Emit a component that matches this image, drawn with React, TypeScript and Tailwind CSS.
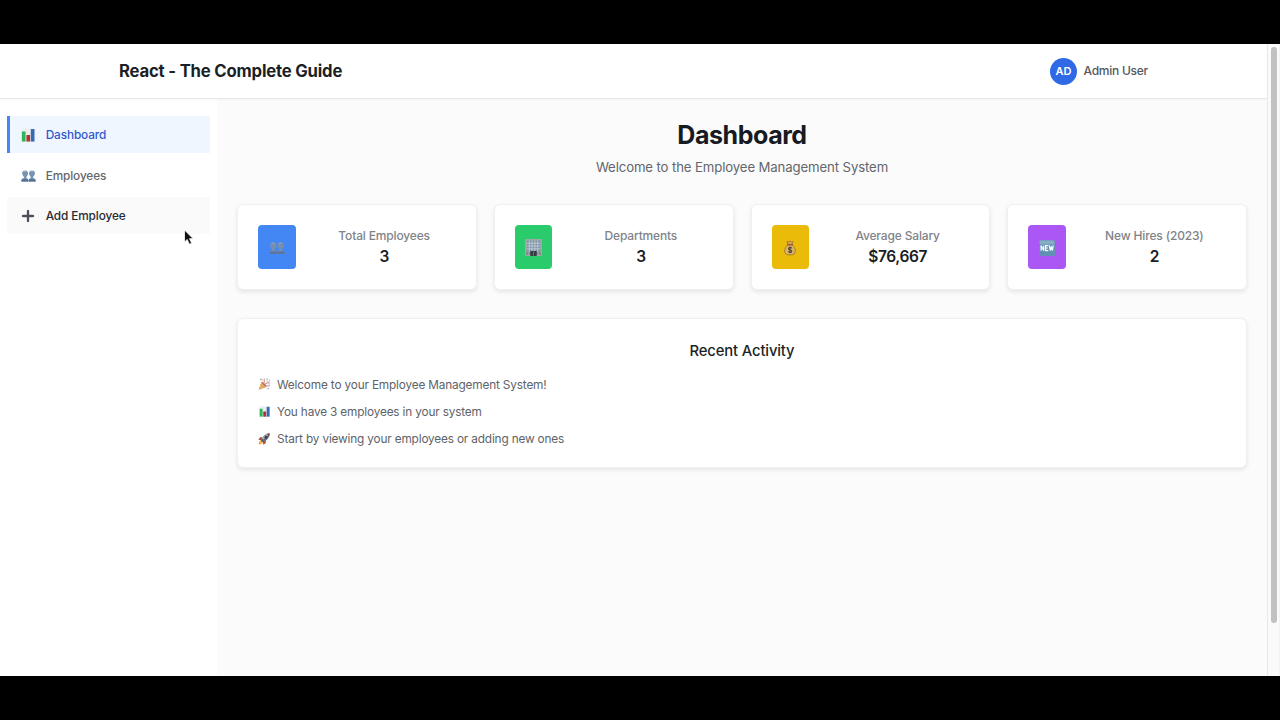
import type { ReactNode } from "react";

type IconProps = { className?: string };

function ChartIcon({ className }: IconProps) {
  return (
    <svg viewBox="0 0 16 16" className={className}>
      <rect x="0.5" y="0.5" width="15" height="15" fill="#edf0f3" />
      <path d="M.5 5.5h15M.5 10.5h15M5.5.5v15M10.5.5v15" stroke="#dfe3e8" strokeWidth=".5" />
      <rect x="1" y="4" width="4.200" height="11.5" fill="#2fb45a" />
      <rect x="6.2" y="8" width="4.200" height="7.5" fill="#b03430" />
      <rect x="11.2" y="1.2" width="4.200" height="14.3" fill="#3767b5" />
    </svg>
  );
}

function PeopleIcon({ className }: IconProps) {
  return (
    <svg viewBox="0 0 18 14" className={className}>
      <g fill="#7793b3">
        <path d="M.4 13.6c0-2.8 1-3.700 3-4.200l.3-1.200C2.600 7.200 1.300 5.600 1.300 3.800 1.300 1.700 2.700.4 4.900.4s3.600 1.300 3.600 3.400c0 1.800-1 3.400-2.200 4.400l.3 1.200c1.500.4 2.300 1.700 2.300 4.200z" />
        <path d="M9.200 13.600c0-2.500.8-3.800 2.300-4.200l.3-1.200c-1.200-1-2.200-2.600-2.200-4.400C9.600 1.700 11 .4 13.200.4s3.600 1.300 3.600 3.400c0 1.800-1.300 3.400-2.400 4.400l.3 1.200c2 .5 3 1.400 3 4.200z" />
      </g>
      <path d="M.4 13.600c0-1.100.2-1.900.7-2.600h7.300c.3.700.4 1.500.4 2.600zM9.200 13.600c0-1.100.1-1.900.4-2.600h7.300c.5.700.7 1.500.7 2.600z" fill="#536f91" />
      <path d="M2.700 2.500c.7-1.300 2.600-1.400 3.400-.3M11.200 2.500c.7-1.300 2.600-1.400 3.400-.3" stroke="#a3b7cc" fill="none" />
    </svg>
  );
}

function PlusIcon({ className }: IconProps) {
  return (
    <svg viewBox="0 0 12 12" className={className}>
      <path d="M6 1v10M1 6h10" stroke="#4b4f55" strokeWidth="2.300" strokeLinecap="round" />
    </svg>
  );
}

function OfficeIcon({ className }: IconProps) {
  return (
    <svg viewBox="0 0 16 16" className={className}>
      <rect width="16" height="16" rx=".6" fill="#a1a8a9" />
      <rect x="1.700" y="1.700" width="12.600" height="10.600" fill="#7893a9" />
      <path d="M4 1.700v10.600M6.600 1.700v10.600M9.300 1.700v10.600M12 1.700v10.600M1.700 4h12.600M1.700 6.600h12.600M1.700 9.300h12.600" stroke="#c9d0d3" strokeWidth=".8" />
      <path d="M1 13.700h14" stroke="#777d7d" strokeWidth="2" strokeDasharray="2 1" />
      <rect x="5" y="11.300" width="6" height="4.700" fill="#343b3e" />
      <path d="M8 11.500V16" stroke="#748287" strokeWidth=".7" />
    </svg>
  );
}

function MoneyIcon({ className }: IconProps) {
  return (
    <svg viewBox="0 0 14 18" className={className}>
      <path d="M4.500 4.800 3.500 1.200 5.700 2 7 .7 8.400 2l2.100-.8-1 3.600z" fill="#d7aa55" stroke="#8c632f" strokeWidth=".7" />
      <path d="M4.500 5.500C2 7.200.8 9.800.8 12.600c0 3.200 2 4.500 6.200 4.500s6.200-1.300 6.200-4.500c0-2.800-1.200-5.400-3.700-7.100z" fill="#d9b567" stroke="#8c632f" strokeWidth=".8" />
      <path d="M4 5h6" stroke="#ac5330" strokeWidth="1.300" strokeLinecap="round" />
      <path d="M9.200 9.200C8.500 8 5.200 8 5.200 9.800c0 2 4 .9 4 3 0 1.800-3.500 1.800-4.300.4M7 7.300v7.700" fill="none" stroke="#4a3923" strokeWidth="1.200" />
    </svg>
  );
}

function NewIcon({ className }: IconProps) {
  return (
    <svg viewBox="0 0 16 16" className={className}>
      <rect width="16" height="16" rx="1.500" fill="#6290b5" />
      <rect x=".6" y=".6" width="14.800" height="4" rx="1" fill="#88acc5" />
      <path d="M2.100 10.700V5.400l2.700 5.300V5.400M9.300 5.600h-2.700v5h2.700M6.600 8h2.300M10.300 5.400l1 5.100 1-4.100 1 4.100 1-5.100" fill="none" stroke="#fff" strokeWidth="1.150" />
    </svg>
  );
}

function PartyIcon({ className }: IconProps) {
  return (
    <svg viewBox="0 0 16 16" className={className}>
      <path d="M.7 15.300 4.500 4.500l6.700 6.900z" fill="#e7b36d" />
      <path d="m3.300 8 4.800 4.800M2 11.700l2.500 2.500" stroke="#d09468" strokeWidth="1.200" />
      <path d="M4.500 4.500c2 .5 5.900 4.100 6.700 6.900-2.600-.3-6-4-6.700-6.900z" fill="#b56b50" />
      <path d="M7 6.500C9.500 5 7 3 8.300.8M9 8.400c1.500-3.200 4-.5 5.500-4M10.500 10.300c1.700-1.300 2.700.8 4.700-.5" fill="none" stroke="#ce8f8c" strokeWidth="1.300" />
      <path d="m3 1 1.400 1.300M11 2l1.200-1M14 2.500l1 .4M13.500 7.500h1.500M12.200 13l1.400 1" stroke="#6c9dcc" strokeWidth="1.500" />
      <path d="m5.300 2 1 1M12.300 3.700l-1 1" stroke="#e4b548" strokeWidth="1.500" />
    </svg>
  );
}

function RocketIcon({ className }: IconProps) {
  return (
    <svg viewBox="0 0 16 16" className={className}>
      <path d="m5.500 5.200-3 .8-2 3 4.200.5zM10.800 10.500l-.7 3-3 2-.7-4.200z" fill="#b8493d" />
      <path d="M3.800 9.500c-2 .6-2.700 2.900-2.900 5.600 2.700-.2 4.900-.9 5.600-2.900z" fill="#ec9a38" />
      <path d="M3.200 11.200c-.7.500-1 1.400-1.100 2.600 1.200-.1 2.100-.4 2.700-1.100z" fill="#f7dc67" />
      <path d="M15.500.5C11 .6 7.300 2.700 4 9l3 3c6.300-3.300 8.500-7 8.500-11.500z" fill="#666c76" />
      <path d="M15.500.5C12 .6 8.500 2.300 5.500 7l1.700 1.500z" fill="#b0b4bb" />
      <path d="M15.500.5c-1.300 0-2.600.2-3.700.7l3 3c.5-1.100.7-2.400.7-3.700z" fill="#8b4543" />
      <circle cx="10.500" cy="5.500" r="1.700" fill="#303c4b" />
      <path d="m4 9 3 3" stroke="#353d48" strokeWidth="1.300" />
    </svg>
  );
}

function NavItem({ icon, label, className }: { icon: ReactNode; label: string; className: string }) {
  return (
    <a className={`flex h-[37px] items-center border-l-[3px] pl-2.5 text-[11.800px] leading-4 font-medium tracking-[-0.110px] ${className}`}>
      <span className="flex w-4 shrink-0 justify-center">{icon}</span>
      <span className="ml-[9.700px] whitespace-nowrap">{label}</span>
    </a>
  );
}

function StatCard({ icon, label, value, tile }: { icon: ReactNode; label: string; value: string; tile: string }) {
  return (
    <section className="flex h-[86px] items-center rounded-[6px] border border-[#f0f0f1] bg-white px-5 shadow-[0_2px_4px_rgba(0,0,0,0.09)]">
      <div className={`flex h-11 w-[37.500px] shrink-0 items-center justify-center rounded-[4px] pt-px ${tile}`}>{icon}</div>
      <div className="ml-[17px] flex-1 text-center whitespace-nowrap">
        <p className="text-[12px] leading-[17px] font-medium tracking-[-0.160px] text-[#808389]">{label}</p>
        <p className="mt-px text-[15.500px] leading-[23px] font-semibold tracking-[-0.400px] text-[#1a1d23]">{value}</p>
      </div>
    </section>
  );
}

function Activity({ icon, text }: { icon: ReactNode; text: string }) {
  return (
    <li className="flex h-[17px] items-center text-[11.800px] leading-[17px] tracking-[-0.160px] text-[#5e6269]">
      <span className="flex w-3 justify-center">{icon}</span>
      <span className="ml-[7px] pt-[2px] whitespace-nowrap">{text}</span>
    </li>
  );
}

export default function App() {
  return (
    <div className="flex h-[720px] w-[1280px] flex-col overflow-hidden bg-black py-11 font-['Inter','Liberation_Sans',sans-serif]">
      <div className="flex h-[632px] bg-[#fbfbfb]">
        <div className="flex w-[1267px] flex-col">
          <header className="z-10 flex h-[55px] shrink-0 items-center justify-between border-b border-[#e8e8e9] bg-white pr-[119px] pl-[119px] shadow-[0_1px_2px_rgba(0,0,0,0.03)]">
            <h1 className="text-[16.700px] leading-6 font-bold tracking-[-0.190px] whitespace-nowrap text-[#1c1f26]">React - The Complete Guide</h1>
            <div className="flex items-center">
              <div className="flex size-[27px] items-center justify-center rounded-full bg-[#3069e6] text-[11px] font-semibold text-white">AD</div>
              <span className="ml-[6.500px] text-[12px] leading-4 font-medium tracking-[-0.250px] whitespace-nowrap text-[#54575d]">Admin User</span>
            </div>
          </header>
          <div className="flex min-h-0 flex-1">
            <aside className="w-[217px] shrink-0 bg-white px-[7px] pt-[17px]">
              <nav className="flex flex-col gap-[4px]">
                <NavItem icon={<ChartIcon className="size-[14px]" />} label="Dashboard" className="border-[#4785f4] bg-[#eff6ff] text-[#3059ce]" />
                <NavItem icon={<PeopleIcon className="h-[12px] w-[15px]" />} label="Employees" className="border-transparent text-[#64676d]" />
                <NavItem icon={<PlusIcon className="size-3" />} label="Add Employee" className="-mt-px border-transparent bg-[#fafafa] text-[#282b31]" />
              </nav>
            </aside>
            <main className="min-w-0 flex-1 pt-[20px] pr-5 pl-5">
              <div className="text-center">
                <h2 className="text-[25px] leading-[32px] font-bold tracking-[-0.450px] text-[#161a22]">Dashboard</h2>
                <p className="mt-[6px] text-[13.200px] leading-[20px] tracking-[-0.120px] text-[#63666c]">Welcome to the Employee Management System</p>
              </div>
              <div className="mt-[27px] grid grid-cols-4 gap-[17px]">
                <StatCard icon={<PeopleIcon className="h-[14px] w-4 opacity-80 grayscale-50" />} label="Total Employees" value="3" tile="bg-[#4387f5]" />
                <StatCard icon={<OfficeIcon className="size-[17px]" />} label="Departments" value="3" tile="bg-[#2acb6b]" />
                <StatCard icon={<MoneyIcon className="h-4 w-3" />} label="Average Salary" value="$76,667" tile="bg-[#eabb08]" />
                <StatCard icon={<NewIcon className="size-4" />} label="New Hires (2023)" value="2" tile="bg-[#aa57f5]" />
              </div>
              <section className="mt-[28px] h-[150px] rounded-[6px] border border-[#f0f0f1] bg-white px-5 pt-[20px] shadow-[0_2px_4px_rgba(0,0,0,0.09)]">
                <h3 className="text-center text-[14.800px] leading-6 font-medium tracking-[-0.140px] text-[#1c1f25]">Recent Activity</h3>
                <ul className="mt-[13px] flex flex-col gap-[10px]">
                  <Activity icon={<PartyIcon className="size-[12.500px] shrink-0" />} text="Welcome to your Employee Management System!" />
                  <Activity icon={<ChartIcon className="size-[11px]" />} text="You have 3 employees in your system" />
                  <Activity icon={<RocketIcon className="size-[12px]" />} text="Start by viewing your employees or adding new ones" />
                </ul>
              </section>
            </main>
          </div>
        </div>
        <div className="w-[13px] border-x border-l-[#e9e9e9] border-r-[#f3f3f3] bg-[#fafafa] pt-[3px] pl-[2.700px]">
          <div className="h-[576px] w-[6.600px] rounded-full bg-[#c1c1c1]" />
        </div>
      </div>
      <svg className="absolute top-[229px] left-[183px] h-[17px] w-[11px]" viewBox="0 0 11 17">
        <path d="M1.500 1v12l2.700-2.500 2.200 4.700 2.300-1-2.200-4.500h3.700z" fill="#111" stroke="#fff" strokeWidth=".8" />
      </svg>
    </div>
  );
}
